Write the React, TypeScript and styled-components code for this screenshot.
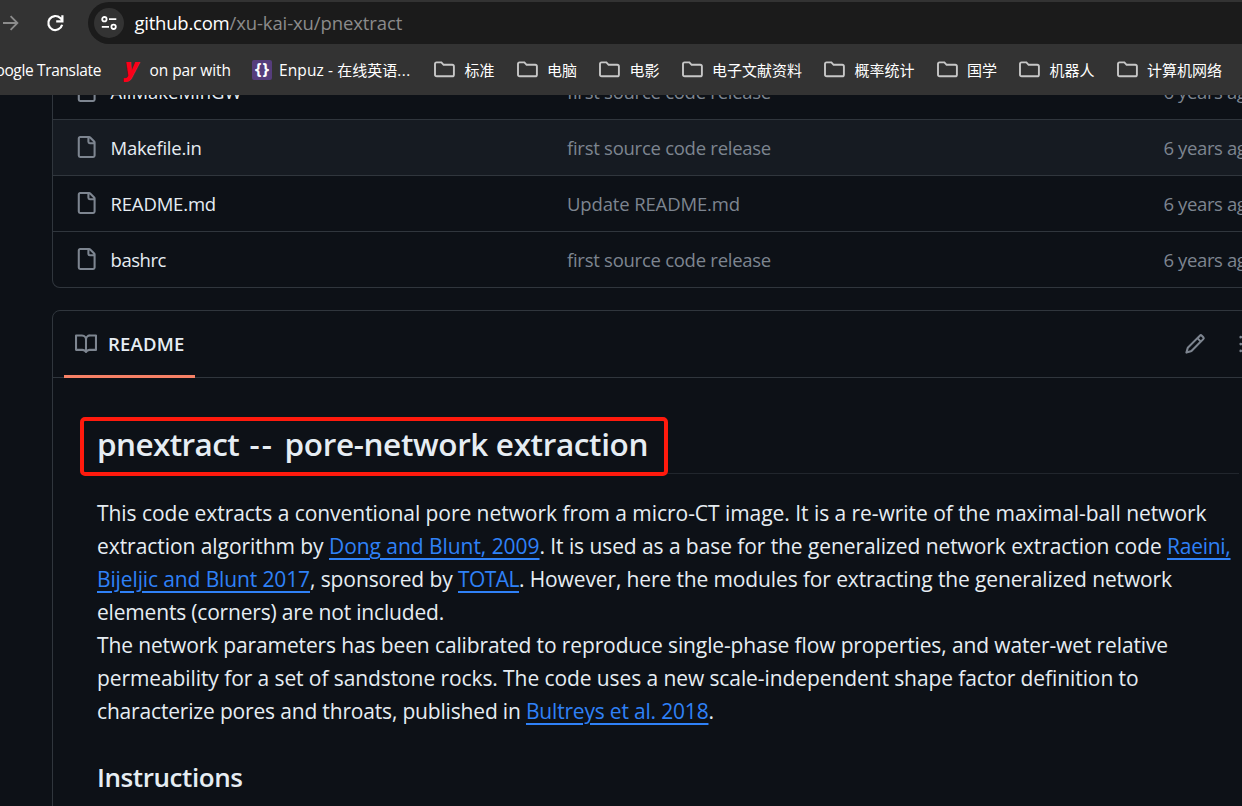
import React from 'react';
import styled, { createGlobalStyle } from 'styled-components';

const GlobalStyle = createGlobalStyle`
  * { box-sizing: border-box; }
  html, body { margin: 0; background: #0d1117; overflow: hidden; }
  body { font-family: "Open Sans", "Noto Sans CJK SC", sans-serif; }
  svg { display: block; flex: none; }
`;

const Window = styled.div`
  display: flex;
  flex-direction: column;
  width: 1242px;
  height: 806px;
  overflow: hidden;
`;

/* Browser chrome */

const Toolbar = styled.div`
  display: flex;
  flex: none;
  height: 46px;
  padding-top: 2px;
  background: #333333;
`;

const NavButtons = styled.div`
  display: flex;
  align-items: center;
  gap: 25px;
  width: 88px;
  height: 42px;
`;

const AddressBar = styled.div`
  display: flex;
  flex: 1;
  align-items: center;
  height: 42px;
  padding-left: 6px;
  border-radius: 21px 0 0 21px;
  background: #1b1b1b;
`;

const SiteInfo = styled.div`
  display: flex;
  align-items: center;
  justify-content: center;
  width: 30px;
  height: 30px;
  margin-right: 10.5px;
  border-radius: 50%;
  background: #333333;
`;

const Url = styled.div`
  font-size: 18.5px;
  line-height: 30px;
  letter-spacing: -0.11px;
  white-space: pre;
  color: #8b8b8b;
`;

const Host = styled.span`
  letter-spacing: -0.23px;
  color: #ffffff;
`;

const BookmarkBar = styled.div`
  display: flex;
  flex: none;
  align-items: center;
  height: 49px;
  padding-bottom: 2px;
  background: #333333;
`;

const Bookmark = styled.div<{ $gap?: number; $track?: number; $width: number; $end?: boolean }>`
  display: flex;
  flex: none;
  align-items: center;
  justify-content: ${(p) => (p.$end ? 'flex-end' : 'flex-start')};
  gap: ${(p) => p.$gap ?? 0}px;
  width: ${(p) => p.$width}px;
  margin-right: ${(p) => (p.$end ? 24 : 0)}px;
  font-size: 15.5px;
  line-height: 24px;
  letter-spacing: ${(p) => p.$track ?? 0}px;
  white-space: pre;
  color: #ffffff;
`;

const Folders = styled.div`
  display: flex;
  gap: 22.12px;
`;

const Folder = styled.div`
  display: flex;
  flex: none;
  align-items: center;
  gap: 9.4px;
  font-size: 15px;
  line-height: 24px;
  white-space: nowrap;
  color: #ffffff;
`;

const Cjk = styled.span`
  font-size: 15px;
  letter-spacing: 0;
`;

const Dots = styled.span`
  letter-spacing: 0.6px;
`;

const RedLetter = styled.span`
  width: 15px;
  height: 26px;
  font: italic 800 25px/18px "Open Sans", sans-serif;
  color: #fb0019;
`;

const BraceTile = styled.span`
  display: flex;
  align-items: center;
  justify-content: center;
  width: 20px;
  height: 20px;
  border-radius: 2px;
  background: #563d7c;
  font: 700 16.5px/18px "Open Sans", sans-serif;
  letter-spacing: 1px;
  padding: 0 0 2px 1px;
`;

/* Repository page */

const Page = styled.main`
  flex: 1;
  min-height: 0;
  padding-left: 52px;
  overflow: hidden;
  background: #0d1117;
`;

const FileTable = styled.div`
  width: 1231px;
  margin-top: -31px;
  border: 1px solid #30363d;
  border-top: 0;
  border-radius: 0 0 8px 8px;
  overflow: hidden;
`;

const FileRow = styled.div<{ $active?: boolean }>`
  display: grid;
  grid-template-columns: 35.5px 456.5px 596.5px auto;
  align-items: center;
  height: 56px;
  padding-left: 22px;
  border-bottom: 1px solid #30363d;
  background: ${(p) => (p.$active ? '#161b22' : 'transparent')};
  font-size: 18.5px;
  line-height: 28px;
  white-space: nowrap;
  color: #7d8590;

  &:last-child { height: 55px; border-bottom: 0; }

  svg { margin-bottom: 1px; }
`;

const Cell = styled.span<{ $track: number; $strong?: boolean }>`
  letter-spacing: ${(p) => p.$track}px;
  ${(p) => p.$strong && 'color: #e6edf3;'}
`;

const Readme = styled.section`
  width: 1231px;
  height: 600px;
  margin-top: 22px;
  border: 1px solid #30363d;
  border-radius: 8px;
`;

const ReadmeHeader = styled.div`
  display: flex;
  align-items: center;
  height: 67px;
  padding-left: 11px;
  border-bottom: 1px solid #30363d;
`;

const Tab = styled.div`
  display: flex;
  align-items: center;
  gap: 11px;
  width: 131px;
  height: 67px;
  margin: 1px 989px 0 0;
  padding: 2px 0 0 11px;
  border-bottom: 3.5px solid #f78166;
  font-size: 18.5px;
  font-weight: 600;
  line-height: 28px;
  letter-spacing: 0.2px;
  color: #e6edf3;
`;

const HeaderActions = styled.div`
  display: flex;
  gap: 32px;
`;

const Article = styled.article`
  padding: 44px 43px 0 44px;
  color: #e6edf3;
`;

const Title = styled.h2`
  position: relative;
  margin: 0 0 23px;
  padding-bottom: 8px;
  border-bottom: 1px solid #21262d;
  font-size: 31.5px;
  font-weight: 600;
  line-height: 43px;
  letter-spacing: -0.37px;
  white-space: pre;
`;

const Highlight = styled.span`
  position: absolute;
  top: -5px;
  left: -17.5px;
  width: 588px;
  height: 59px;
  border: 4px solid #ff1a0d;
  border-radius: 5px;
`;

const Paragraph = styled.p`
  margin: 0 0 32px;
  font-size: 21px;
  line-height: 33px;
`;

const Line = styled.span<{ $track: number }>`
  display: block;
  height: 33px;
  white-space: pre;
  letter-spacing: ${(p) => p.$track}px;
`;

const Run = styled.span<{ $track: number }>`
  letter-spacing: ${(p) => p.$track}px;
`;

const Link = styled.a<{ $track: number }>`
  letter-spacing: ${(p) => p.$track}px;
  color: #2f81f7;
  text-decoration: underline;
  text-decoration-thickness: 2px;
  text-underline-offset: 4px;
`;

const Subtitle = styled.h3`
  margin: 0;
  font-size: 26px;
  font-weight: 600;
  line-height: 34.4px;
  letter-spacing: -0.42px;
`;

const FILE =
  'M2 1.75C2 .784 2.784 0 3.75 0h6.586c.464 0 .909.184 1.237.513l2.914 2.914c.329.328.513.773.513 1.237v9.586A1.75 1.75 0 0 1 13.25 16h-9.5A1.75 1.75 0 0 1 2 14.25Zm1.75-.25a.25.25 0 0 0-.25.25v12.5c0 .138.112.25.25.25h9.5a.25.25 0 0 0 .25-.25V6h-2.75A1.75 1.75 0 0 1 9 4.25V1.5Zm6.75.062V4.25c0 .138.112.25.25.25h2.688l-.011-.013-2.914-2.914-.013-.011Z';
const BOOK =
  'M0 1.75A.75.75 0 0 1 .75 1h4.253c1.227 0 2.317.59 3 1.501A3.743 3.743 0 0 1 11.006 1h4.245a.75.75 0 0 1 .75.75v10.5a.75.75 0 0 1-.75.75h-4.507a2.25 2.25 0 0 0-1.591.659l-.622.621a.75.75 0 0 1-1.06 0l-.622-.621A2.25 2.25 0 0 0 5.258 13H.75a.75.75 0 0 1-.75-.75Zm7.251 10.324.004-5.073-.002-2.253A2.25 2.25 0 0 0 5.003 2.5H1.5v9h3.757a3.75 3.75 0 0 1 1.994.574ZM8.755 4.75l-.004 7.322a3.752 3.752 0 0 1 1.992-.572H14.5v-9h-3.495a2.25 2.25 0 0 0-2.25 2.25Z';
const PENCIL =
  'M11.013 1.427a1.75 1.75 0 0 1 2.474 0l1.086 1.086a1.75 1.75 0 0 1 0 2.474l-8.61 8.61c-.21.21-.47.364-.756.445l-3.251.93a.75.75 0 0 1-.927-.928l.929-3.25c.081-.286.235-.547.445-.758l8.61-8.61Zm.176 4.823L9.75 4.81l-6.286 6.287a.253.253 0 0 0-.064.108l-.558 1.953 1.953-.558a.253.253 0 0 0 .108-.064Zm1.238-3.763a.25.25 0 0 0-.354 0L10.811 3.75l1.439 1.44 1.263-1.263a.25.25 0 0 0 0-.354Z';
const LIST =
  'M5.75 2.5h8.5a.75.75 0 0 1 0 1.5h-8.5a.75.75 0 0 1 0-1.5Zm0 5h8.5a.75.75 0 0 1 0 1.5h-8.5a.75.75 0 0 1 0-1.5Zm0 5h8.5a.75.75 0 0 1 0 1.5h-8.5a.75.75 0 0 1 0-1.5ZM2 14a1 1 0 1 1 0-2 1 1 0 0 1 0 2Zm1-6a1 1 0 1 1-2 0 1 1 0 0 1 2 0ZM2 4a1 1 0 1 1 0-2 1 1 0 0 1 0 2Z';

const Octicon = ({ d }: { d: string }) => (
  <svg width="22" height="22" viewBox="0 0 16 16" fill="#7d8590">
    <path d={d} />
  </svg>
);

const FolderIcon = () => (
  <svg width="21" height="17" viewBox="0 0 21 17" fill="none" stroke="#c7c7c7" strokeWidth="1.9">
    <path d="M2.6 1.4H7.4L9.6 3.8H18.2Q19.9 3.8 19.9 5.4V13.7Q19.9 15.3 18.2 15.3H2.7Q1 15.3 1 13.7V3Q1 1.4 2.6 1.4Z" />
  </svg>
);

const folders = ['标准', '电脑', '电影', '电子文献资料', '概率统计', '国学', '机器人', '计算机网络'];

const release = { message: 'first source code release', messageTrack: -0.263 };
const files = [
  { name: 'AllMakeMinGW', track: -0.022, ...release },
  { name: 'Makefile.in', track: -0.26, ...release, active: true },
  { name: 'README.md', track: -0.172, message: 'Update README.md', messageTrack: -0.141 },
  { name: 'bashrc', track: -0.44, ...release },
];

export default function App() {
  return (
    <Window>
      <GlobalStyle />
      <Toolbar>
        <NavButtons>
          <svg width="20" height="18" viewBox="0 0 20 18" fill="none" stroke="#8c8c8c" strokeWidth="1.8">
            <path d="M3 9H17M10.6 2.2L17.4 9L10.6 15.8" />
          </svg>
          <svg width="20" height="20" viewBox="0 0 20 20" fill="none" stroke="#ffffff" strokeWidth="2.2">
            <path d="M17.1 11.8A7 7 0 1 1 15.3 5.1L17.4 7.2M17.4 2.2V8.4H11.2" />
          </svg>
        </NavButtons>
        <AddressBar>
          <SiteInfo>
            <svg width="16" height="14" viewBox="0 0 16 14" fill="none" stroke="#ffffff" strokeWidth="1.8">
              <circle cx="3.4" cy="3.2" r="2.2" />
              <path d="M8 3.2H15.3M0.8 10.8H8" />
              <circle cx="12.6" cy="10.8" r="2.2" />
            </svg>
          </SiteInfo>
          <Url>
            <Host>github.com</Host>/xu-kai-xu/pnextract
          </Url>
        </AddressBar>
      </Toolbar>
      <BookmarkBar>
        <Bookmark $width={101} $end $track={-0.35}>Google Translate</Bookmark>
        <Bookmark $width={127} $gap={9.5} $track={-0.07}>
          <RedLetter>y</RedLetter>on par with
        </Bookmark>
        <Bookmark $width={182} $gap={7} $track={0.1}>
          <BraceTile>{'{}'}</BraceTile>
          <span>Enpuz - <Cjk>在线英语<Dots>...</Dots></Cjk></span>
        </Bookmark>
        <Folders>
          {folders.map((name) => (
            <Folder key={name}>
              <FolderIcon />
              {name}
            </Folder>
          ))}
        </Folders>
      </BookmarkBar>
      <Page>
        <FileTable>
          {files.map((f) => (
            <FileRow key={f.name} $active={'active' in f}>
              <Octicon d={FILE} />
              <Cell $track={f.track} $strong>{f.name}</Cell>
              <Cell $track={f.messageTrack}>{f.message}</Cell>
              <Cell $track={-0.38}>6 years ago</Cell>
            </FileRow>
          ))}
        </FileTable>
        <Readme>
          <ReadmeHeader>
            <Tab>
              <Octicon d={BOOK} />
              README
            </Tab>
            <HeaderActions>
              <Octicon d={PENCIL} />
              <Octicon d={LIST} />
            </HeaderActions>
          </ReadmeHeader>
          <Article>
            <Title>
              <Run $track={-0.6}>pnextract</Run>
              <Run $track={2.2}>{' -- '}</Run>
              pore-network extraction
              <Highlight />
            </Title>
            <Paragraph>
              <Line $track={-0.046}>
                This code extracts a conventional pore network from a micro-CT image. It is a re-write of the maximal-ball network
              </Line>
              <Line $track={-0.079}>
                <Run $track={-0.055}>{'extraction algorithm by '}</Run>
                <Link $track={-0.05}>Dong and Blunt, 2009</Link>
                {'. It is used as a base for the generalized network extraction code '}
                <Link $track={-0.263}>Raeini,</Link>
              </Line>
              <Line $track={-0.124}>
                <Link $track={-0.123}>Bijeljic and Blunt 2017</Link>
                <Run $track={-0.094}>{', sponsored by '}</Run>
                <Link $track={-0.544}>TOTAL</Link>
                . However, here the modules for extracting the generalized network
              </Line>
              <Line $track={-0.186}>elements (corners) are not included.</Line>
              <Line $track={-0.124}>
                The network parameters has been calibrated to reproduce single-phase flow properties, and water-wet relative
              </Line>
              <Line $track={-0.091}>
                permeability for a set of sandstone rocks. The code uses a new scale-independent shape factor definition to
              </Line>
              <Line $track={-0.173}>
                {'characterize pores and throats, published in '}
                <Link $track={-0.19}>Bultreys et al. 2018</Link>.
              </Line>
            </Paragraph>
            <Subtitle>Instructions</Subtitle>
          </Article>
        </Readme>
      </Page>
    </Window>
  );
}
